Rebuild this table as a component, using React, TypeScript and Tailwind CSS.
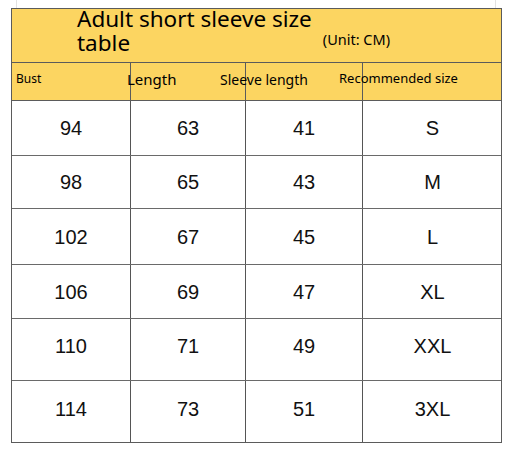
import React from "react";

const rows = [
  ["94", "63", "41", "S", "h-[55px]", ""],
  ["98", "65", "43", "M", "h-[53px]", ""],
  ["102", "67", "45", "L", "h-[56px]", ""],
  ["106", "69", "47", "XL", "h-[54px]", ""],
  ["110", "71", "49", "XXL", "h-[62px]", "pb-[7px]"],
  ["114", "73", "51", "3XL", "h-[61px]", "pb-[6px]"],
];

const cols = "grid grid-cols-[119px_115px_117px_139px]";

export default function App() {
  return (
    <div className="relative w-[512px] h-[451px] bg-white overflow-hidden">
      <div className="absolute left-[16px] top-0 h-[8px] w-px bg-[#e2e2e2]" />
      <div className="absolute left-[495px] top-0 h-[8px] w-px bg-[#e2e2e2]" />
      <div className="pt-[8px] pl-[11px]">
        <div className="w-[491px] border border-[#5b5b5b]">
          <div className="h-[54px] bg-[#fcd561] border-b border-[#5b5b5b] flex items-start text-black" style={{ fontFamily: '"Noto Sans", sans-serif' }}>
            <div className="ml-[65px] mt-[-2px] text-[22.5px] leading-[24px]">
              Adult short sleeve size
              <br />
              table
            </div>
            <div className="ml-[11px] mt-[20px] text-[14.5px] leading-[20px] whitespace-nowrap">(Unit: CM)</div>
          </div>
          <div className={`${cols} h-[38px] bg-[#fcd561] border-b border-[#5b5b5b] text-black`} style={{ fontFamily: '"Noto Sans", sans-serif' }}>
            <div className="border-r border-[#5b5b5b] flex items-center pb-[5px] pl-[4px] text-[12px]">Bust</div>
            <div className="border-r border-[#5b5b5b] flex items-center pb-[5px] text-[15px] whitespace-nowrap">
              <span className="ml-[-4px] relative">Length</span>
            </div>
            <div className="border-r border-[#5b5b5b] flex items-center pb-[5px] text-[14px] whitespace-nowrap">
              <span className="ml-[-26px] relative">Sleeve length</span>
            </div>
            <div className="flex items-center pb-[5px] text-[13px] whitespace-nowrap">
              <span className="ml-[-24px] relative">Recommended size</span>
            </div>
          </div>
          {rows.map((r, i) => (
            <div
              key={i}
              className={`${cols} ${r[4]} ${i < rows.length - 1 ? "border-b" : ""} border-[#6a6a6a] text-[20px] text-[#111]`}
              style={{ fontFamily: '"Liberation Sans", Arial, sans-serif' }}
            >
              <div className={`border-r border-[#555] flex items-center justify-center ${r[5]}`}>{r[0]}</div>
              <div className={`border-r border-[#555] flex items-center justify-center ${r[5]}`}>{r[1]}</div>
              <div className={`border-r border-[#555] flex items-center justify-center ${r[5]}`}>{r[2]}</div>
              <div className={`flex items-center justify-center ${r[5]}`}>{r[3]}</div>
            </div>
          ))}
        </div>
      </div>
    </div>
  );
}
